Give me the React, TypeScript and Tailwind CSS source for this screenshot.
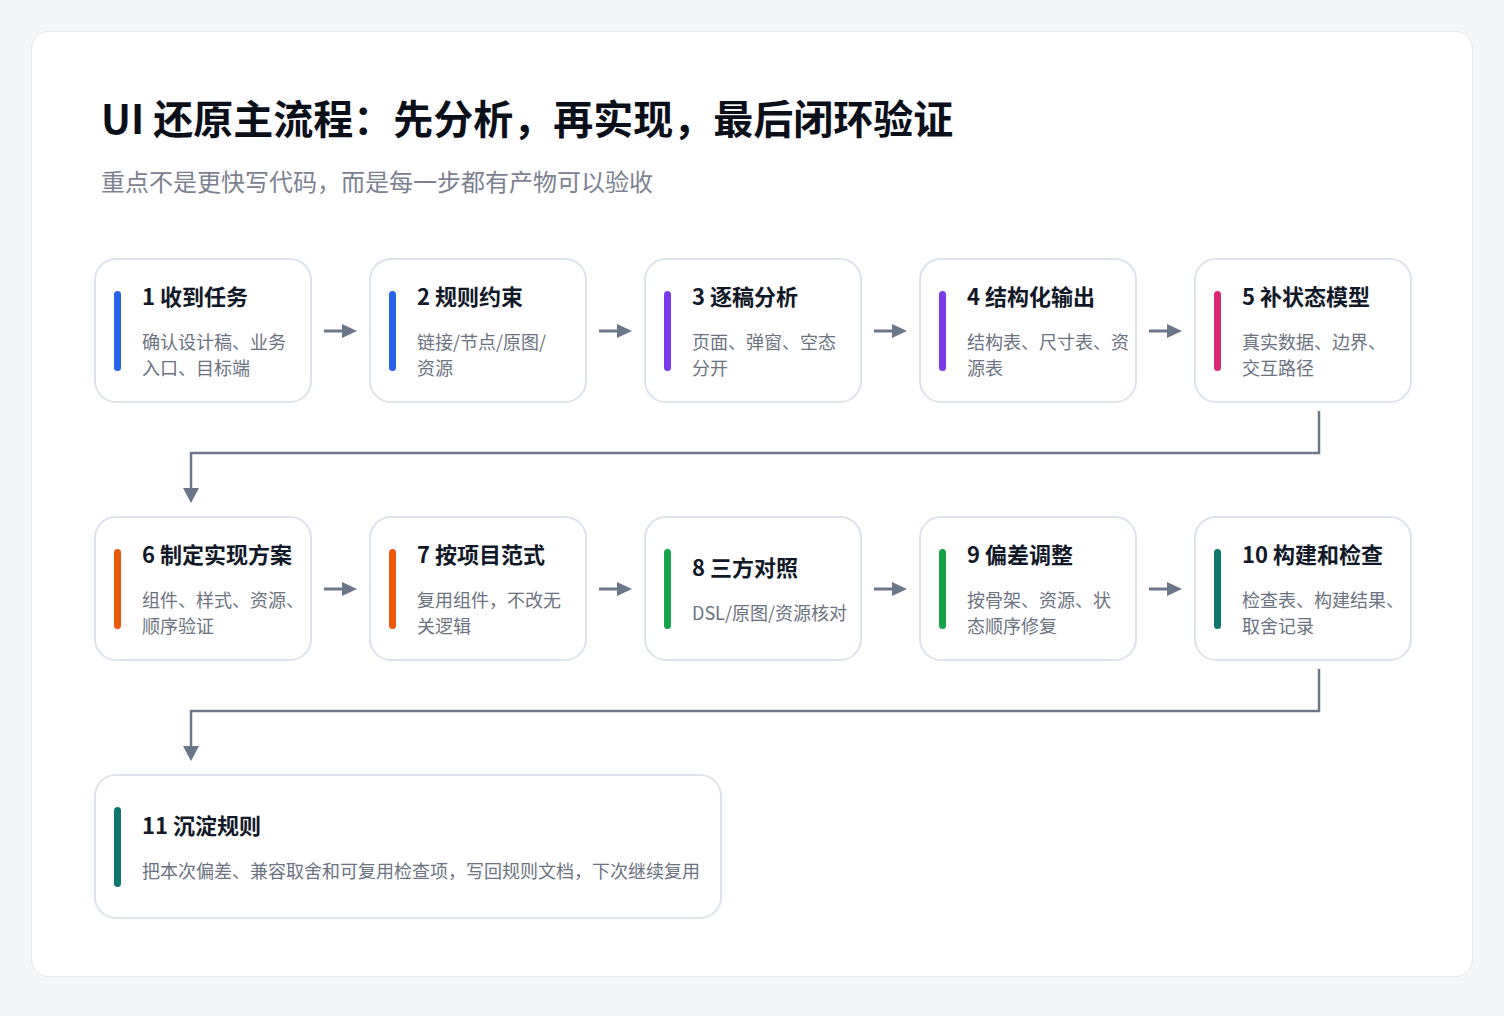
const steps = [
  { t: "1 收到任务", d: "确认设计稿、业务\n入口、目标端", c: "bg-[#2563eb]" },
  { t: "2 规则约束", d: "链接/节点/原图/\n资源", c: "bg-[#2563eb]" },
  { t: "3 逐稿分析", d: "页面、弹窗、空态\n分开", c: "bg-[#7c3aed]" },
  { t: "4 结构化输出", d: "结构表、尺寸表、资\n源表", c: "bg-[#7c3aed]" },
  { t: "5 补状态模型", d: "真实数据、边界、\n交互路径", c: "bg-[#db2777]" },
  { t: "6 制定实现方案", d: "组件、样式、资源、\n顺序验证", c: "bg-[#ea580c]" },
  { t: "7 按项目范式", d: "复用组件，不改无\n关逻辑", c: "bg-[#ea580c]" },
  { t: "8 三方对照", d: "DSL/原图/资源核对", c: "bg-[#16a34a]" },
  { t: "9 偏差调整", d: "按骨架、资源、状\n态顺序修复", c: "bg-[#16a34a]" },
  { t: "10 构建和检查", d: "检查表、构建结果、\n取舍记录", c: "bg-[#0f766e]" },
];

type Step = { t: string; d: string; c: string };

const Card = ({ s, wide }: { s: Step; wide?: boolean }) => (
  <div
    className={`${wide ? "w-[628px]" : "w-[218px]"} h-[145px] shrink-0 rounded-[22px] border-2 border-[#dde3ec] bg-white flex items-center pl-[18px] pr-1 gap-[21px]`}
  >
    <div className={`w-[7px] h-[80px] rounded-full shrink-0 ${s.c}`} />
    <div className="flex flex-col gap-[19px] whitespace-pre-line">
      <div className="text-[22px] leading-[28px] font-bold text-[#111827]">{s.t}</div>
      <div className="text-[18px] leading-[26px] text-[#6b7280] whitespace-pre">{s.d}</div>
    </div>
  </div>
);

const Arrow = () => (
  <div className="w-[57px] flex items-center justify-center shrink-0">
    <svg width="34" height="16" viewBox="0 0 34 16">
      <line x1="0" y1="8" x2="22" y2="8" stroke="#6b7789" strokeWidth="3" />
      <polygon points="18,1 33,8 18,15" fill="#6b7789" />
    </svg>
  </div>
);

const Connector = () => (
  <svg width="1318" height="113" viewBox="0 0 1318 113" className="block">
    <polyline points="1225,8 1225,50 97,50 97,88" fill="none" stroke="#6b7789" strokeWidth="2.5" />
    <polygon points="89,85 105,85 97,100" fill="#6b7789" />
  </svg>
);

const Row = ({ items }: { items: Step[] }) => (
  <div className="flex">
    {items.map((s, i) => (
      <div key={s.t} className="flex">
        {i > 0 && <Arrow />}
        <Card s={s} />
      </div>
    ))}
  </div>
);

export default function App() {
  return (
    <div
      className="min-h-[1016px] bg-[#f4f5f7] p-[31px]"
      style={{ fontFamily: '"Noto Sans CJK SC", "Noto Sans", sans-serif' }}
    >
      <div className="h-[946px] rounded-[18px] border border-[#e5e7eb] bg-white px-[62px] pt-[61px]">
        <h1 className="pl-[7px] text-[40px] leading-[48px] font-bold text-[#0b0f19]">
          UI 还原主流程：先分析，再实现，最后闭环验证
        </h1>
        <p className="pl-[7px] mt-[24px] text-[24px] leading-[32px] text-[#7b8190]">
          重点不是更快写代码，而是每一步都有产物可以验收
        </p>
        <div className="mt-[61px]">
          <Row items={steps.slice(0, 5)} />
          <Connector />
          <Row items={steps.slice(5, 10)} />
          <Connector />
          <Card wide s={{ t: "11 沉淀规则", d: "把本次偏差、兼容取舍和可复用检查项，写回规则文档，下次继续复用", c: "bg-[#0f766e]" }} />
        </div>
      </div>
    </div>
  );
}
